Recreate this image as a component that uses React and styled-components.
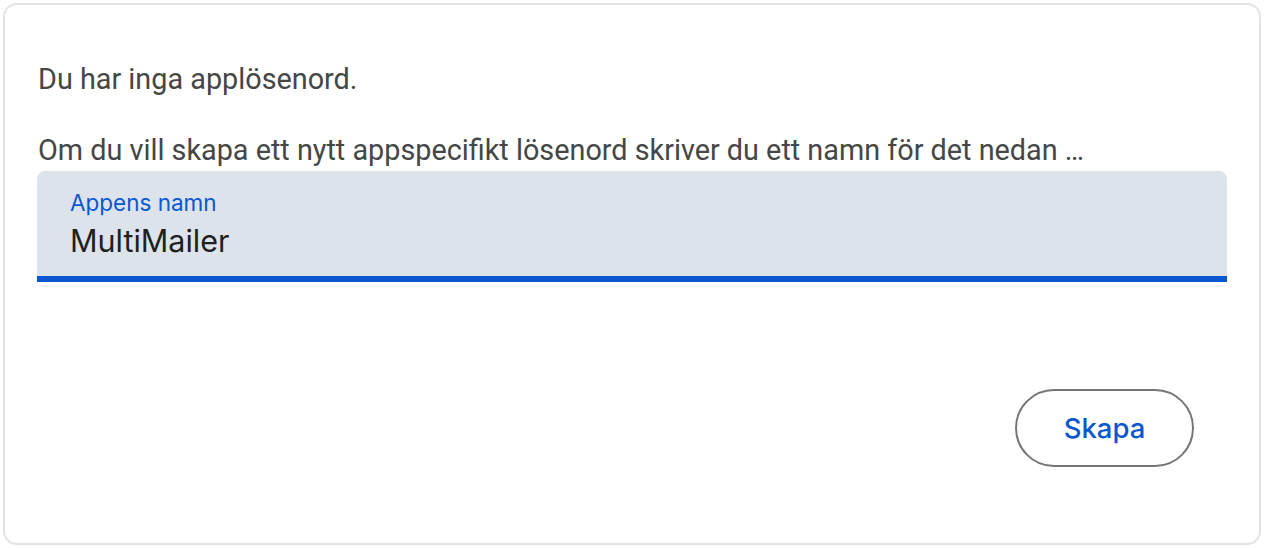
import { createGlobalStyle, styled } from "styled-components";

const GlobalStyle = createGlobalStyle`
  * { box-sizing: border-box; }
  body {
    margin: 0;
    background: #ffffff;
    font-family: Roboto, "Liberation Sans", sans-serif;
  }
`;

const Card = styled.div`
  margin: 3px;
  height: 542px;
  border: 2px solid #e3e3e3;
  border-radius: 14px;
  padding: 54px 32px 0 32px;
  display: flex;
  flex-direction: column;
`;

const Text = styled.p`
  margin: 0 0 ${(p) => p.$gap || 0}px 1px;
  font-family: Roboto, "Liberation Sans", sans-serif;
  font-size: 28.8px;
  line-height: 40px;
  color: #444746;
`;

const Field = styled.div`
  height: 111px;
  background: #dde3ea;
  border-radius: 8px 8px 0 0;
  border-bottom: 6px solid #0b57d0;
  padding: 17px 33px 0 33px;
  display: flex;
  flex-direction: column;
`;

const Label = styled.span`
  font-family: Inter, "Open Sans", sans-serif;
  font-size: 22.5px;
  line-height: 30px;
  color: #0b57d0;
`;

const Value = styled.span`
  font-family: Inter, "Open Sans", sans-serif;
  font-size: 30.5px;
  line-height: 46px;
  color: #1f1f1f;
`;

const Actions = styled.div`
  display: flex;
  justify-content: flex-end;
  padding-right: 33px;
  margin-top: 107px;
`;

const Button = styled.button`
  width: 179px;
  height: 78px;
  border: 2px solid #747775;
  border-radius: 39px;
  background: #ffffff;
  font-family: Inter, "Open Sans", sans-serif;
  font-size: 27.5px;
  font-weight: 500;
  color: #0b57d0;
  cursor: pointer;
`;

const App = () => {
  return (
    <>
      <GlobalStyle />
      <Card>
        <Text $gap={31}>Du har inga applösenord.</Text>
        <Text $gap={1}>
          Om du vill skapa ett nytt appspecifikt lösenord skriver du ett namn för det nedan …
        </Text>
        <Field>
          <Label>Appens namn</Label>
          <Value>MultiMailer</Value>
        </Field>
        <Actions>
          <Button>Skapa</Button>
        </Actions>
      </Card>
    </>
  );
};

export default App;
